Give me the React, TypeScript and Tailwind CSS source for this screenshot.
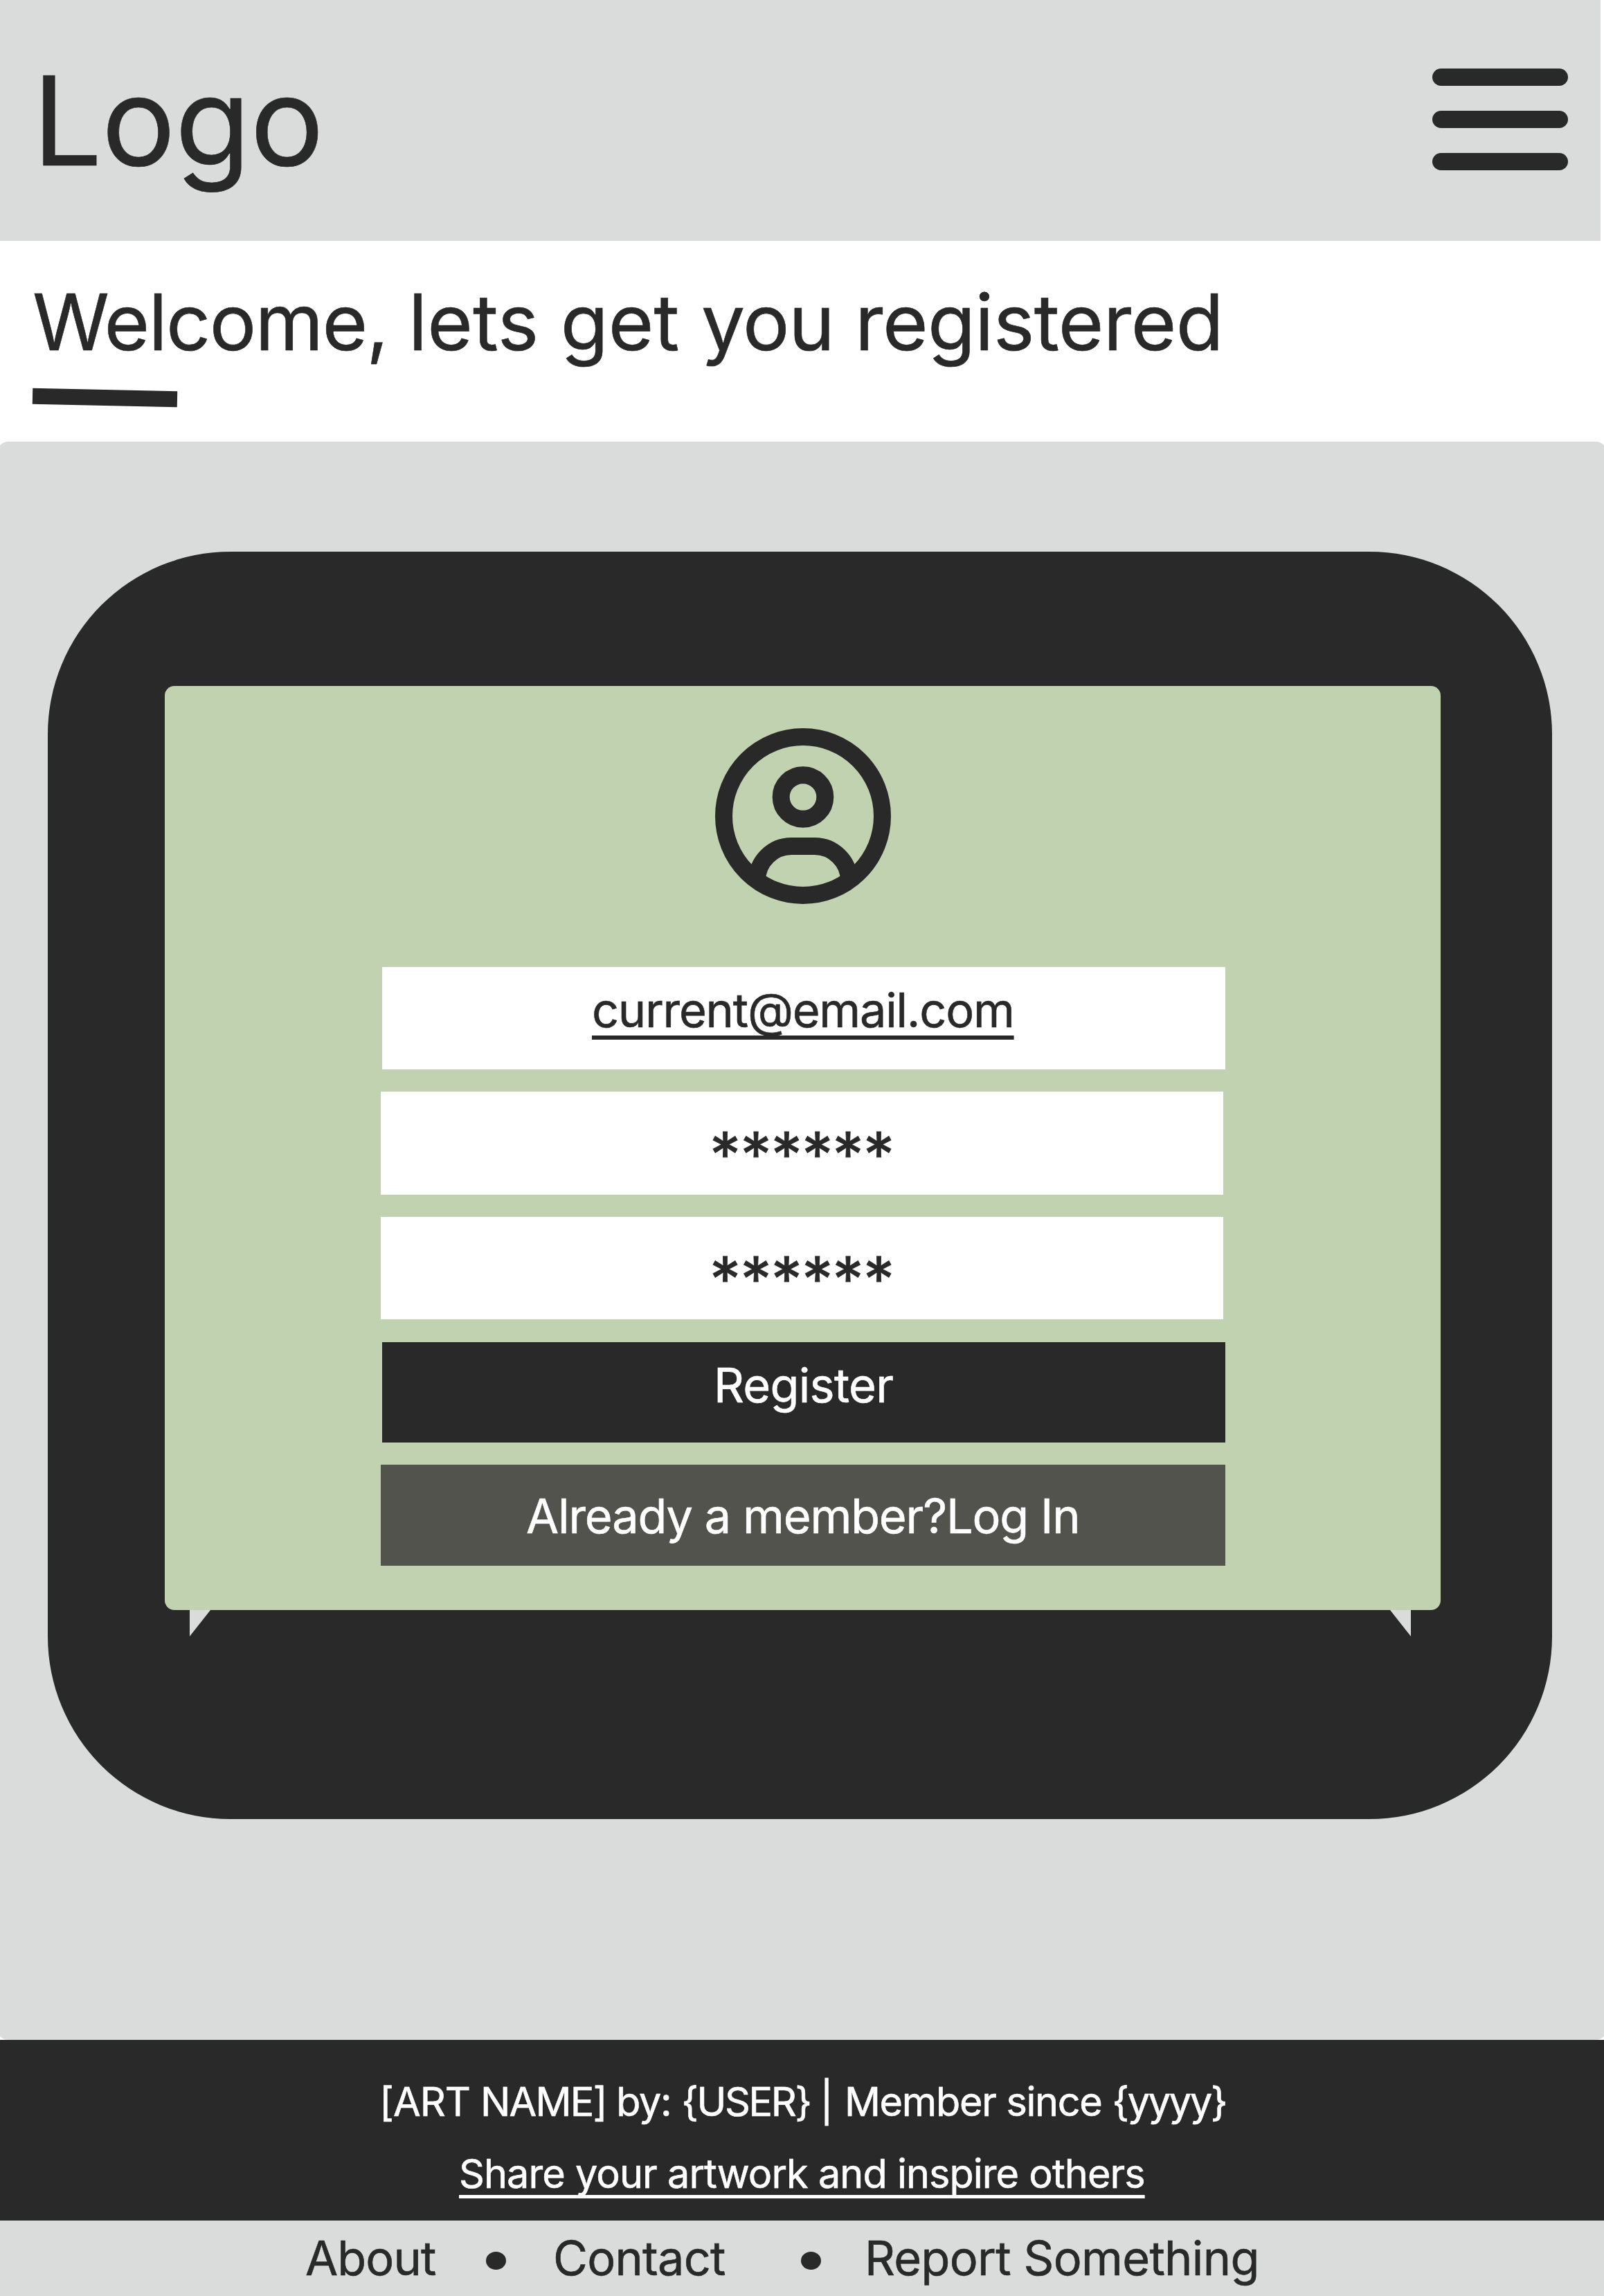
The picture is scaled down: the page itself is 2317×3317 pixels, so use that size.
function MenuButton() {
  return (
    <button aria-label="Menu" className="mt-[99px] mr-[47px] flex h-[147px] w-[196px] flex-col justify-between">
      <span className="block h-[25px] w-full rounded-full bg-[#292929]" />
      <span className="block h-[25px] w-full rounded-full bg-[#292929]" />
      <span className="block h-[25px] w-full rounded-full bg-[#292929]" />
    </button>
  );
}

function Header() {
  return (
    <header className="flex h-[348px] w-[2312px] items-start justify-between bg-[#dadcdb] pl-[47px]">
      <div className="mt-[86px] text-[178px] leading-[178px] tracking-[-0.8px]">Logo</div>
      <MenuButton />
    </header>
  );
}

function Intro() {
  return (
    <section className="flex h-[290px] flex-col items-start bg-white pt-[61px] pl-[47px]">
      <h1 className="text-[112.6px] leading-[113px]">
        <span className="tracking-[-1.7px]">Welcome, </span>
        <span>lets get </span>
        <span className="tracking-[-1.2px]">you </span>
        <span className="tracking-[-0.65px]">registered</span>
      </h1>
      <div className="mt-[41px] h-[23px] w-[209px] rotate-[1.17deg] bg-[#292929]" />
    </section>
  );
}

function UserIcon() {
  return (
    <svg viewBox="0 0 254 254" className="mx-auto block size-[254px]" fill="none" stroke="#292929" strokeWidth="25">
      <circle cx="127" cy="127" r="114.5" />
      <circle cx="127" cy="99.5" r="31.8" />
      <path d="M60.5 220.3a49.8 49.8 0 0 1 49.8-49.8h33.4a49.8 49.8 0 0 1 49.8 49.8" />
    </svg>
  );
}

function RegisterForm() {
  return (
    <form className="flex flex-col items-start pt-[91px] pl-[312px]">
      <div className="ml-[2px] h-[148px] w-[1218px] bg-white pt-[28px] pl-[303px]">
        <div className="text-[68.4px] leading-[68px] tracking-[-1.24px] underline decoration-[6px] underline-offset-[12px] [text-decoration-skip-ink:none]">
          current@email.com
        </div>
      </div>
      <div className="mt-[32px] h-[149px] w-[1217px] bg-white pt-[46px] pl-[475px]">
        <div className="text-[90px] leading-[90px] tracking-[-0.7px] [-webkit-text-stroke:0.8px]">******</div>
      </div>
      <div className="mt-[32px] h-[148px] w-[1217px] bg-white pt-[45px] pl-[475px]">
        <div className="text-[90px] leading-[90px] tracking-[-0.7px] [-webkit-text-stroke:0.8px]">******</div>
      </div>
      <button
        type="button"
        className="mt-[33px] ml-[2px] flex h-[145px] w-[1218px] items-start bg-[#292929] pt-[28px] pl-[479px] text-[68.4px] leading-[68px] tracking-[-0.7px] text-white"
      >
        Register
      </button>
      <button
        type="button"
        className="mt-[32px] flex h-[146px] w-[1220px] items-start bg-[#51534c] pt-[40px] pl-[210px] text-[68.4px] leading-[68px] tracking-[-1.18px] text-white"
      >
        Already a member?Log In
      </button>
    </form>
  );
}

function Tablet() {
  return (
    <div className="ml-[69px] h-[1831px] w-[2173px] rounded-[264px] bg-[#292929] pt-[194px] pl-[169px]">
      <div className="relative h-[1335px] w-[1843px] rounded-[14px] bg-[#c1d2b1] pt-[61px]">
        <UserIcon />
        <RegisterForm />
        <svg viewBox="0 0 30 38" className="absolute top-full left-[36px] h-[38px] w-[30px]" fill="#dadcdb">
          <path d="M0 0H30L0 38Z" />
        </svg>
        <svg viewBox="0 0 30 38" className="absolute top-full left-[1770px] h-[38px] w-[30px]" fill="#dadcdb">
          <path d="M0 0H30V38Z" />
        </svg>
      </div>
    </div>
  );
}

function Footer() {
  return (
    <footer>
      <div className="flex h-[261px] flex-col items-start bg-[#292929] pt-[60px] text-[57.6px] leading-[58px] text-white">
        <p className="pl-[548px] whitespace-nowrap">
          <span className="tracking-[-1.04px]">[ART </span>
          <span className="tracking-[-1.8px]">NAME] </span>
          <span className="tracking-[-1.3px]">by: </span>
          <span className="tracking-[-2.36px]">{"{USER} "}</span>
          <span>| </span>
          <span className="tracking-[-1.33px]">Member since </span>
          <span className="tracking-[-2.3px]">{"{yyyy}"}</span>
        </p>
        <a className="mt-[46px] ml-[663px] whitespace-nowrap tracking-[-0.96px] underline decoration-[5px] underline-offset-[10px] [text-decoration-skip-ink:none]">
          Share your artwork and inspire others
        </a>
      </div>
      <nav className="flex h-[109px] items-start bg-[#dadcdb] pl-[441px] text-[68.4px] leading-[68px]">
        <a className="mt-[20px] w-[261px] tracking-[-0.85px]">About</a>
        <span className="mt-[45px] h-[26px] w-[29px] rounded-[50%] bg-[#292929]" />
        <a className="mt-[20px] ml-[68px] w-[358px] tracking-[-0.75px]">Contact</a>
        <span className="mt-[45px] h-[26px] w-[29px] rounded-[50%] bg-[#292929]" />
        <a className="mt-[20px] ml-[63px] whitespace-nowrap tracking-[-0.68px]">Report Something</a>
      </nav>
    </footer>
  );
}

export default function App() {
  return (
    <div className="h-[3317px] w-[2317px] overflow-hidden bg-white font-['Inter',sans-serif] text-[#292929] [-webkit-text-stroke:0.6px]">
      <Header />
      <Intro />
      <main className="-mx-[4px] h-[2309px] rounded-[16px] bg-[#dadcdb] px-[4px] pt-[159px]">
        <Tablet />
      </main>
      <Footer />
    </div>
  );
}
